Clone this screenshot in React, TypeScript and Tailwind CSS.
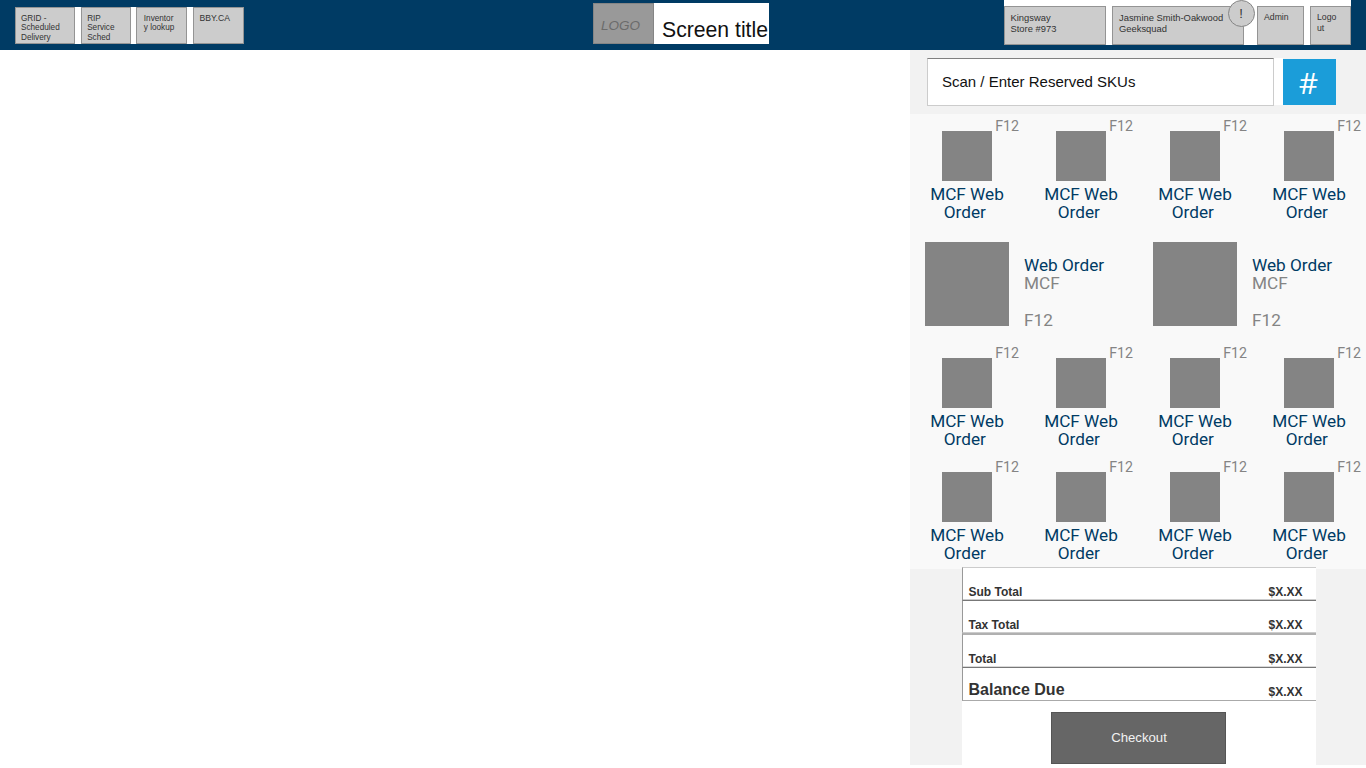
import React from "react";

function NavBox({ className, children }: { className: string; children: React.ReactNode }) {
  return (
    <div className={`shrink-0 border border-[#949494] bg-[#cccccc] text-[#333333] ${className}`}>{children}</div>
  );
}

function Tile() {
  return (
    <button className="relative flex h-[114px] w-[114px] flex-col items-center pt-[17px] text-[#003b64]">
      <span className="absolute top-[4px] right-[5px] text-[14.2px] leading-[16px] text-[#848484]">F12</span>
      <span className="h-[50px] w-[50px] bg-[#848484]" />
      <span className="mt-[4px] text-center text-[17.2px] leading-[18px] whitespace-nowrap">
        MCF Web
        <br />
        Order&nbsp;
      </span>
    </button>
  );
}

function TileRow() {
  return (
    <div className="flex">
      {[0, 1, 2, 3].map((i) => (
        <Tile key={i} />
      ))}
    </div>
  );
}

function WideTile() {
  return (
    <button className="flex h-[113px] w-[228px] gap-[15px] pt-[14px] pl-[15px] text-left text-[17.2px] leading-[18px] text-[#848484]">
      <span className="h-[84px] w-[84px] bg-[#848484]" />
      <span className="flex flex-col pt-[14px]">
        <span className="text-[#003b64]">Web Order</span>
        <span>MCF</span>
        <span className="mt-[19px]">F12</span>
      </span>
    </button>
  );
}

function TotalRow({ label, className, labelClass }: { label: string; className: string; labelClass: string }) {
  return (
    <div className={`flex items-end justify-between border-l border-l-[#999999] pr-[13.5px] pl-[5.5px] font-bold ${className}`}>
      <span className={labelClass}>{label}</span>
      <span className="text-[12px] leading-[14px]">$X.XX</span>
    </div>
  );
}

export default function App() {
  return (
    <div className="flex h-[768px] w-[1366px] flex-col overflow-hidden bg-white font-['Liberation_Sans',Arial,sans-serif]">
      <header className="flex h-[50px] shrink-0 items-start bg-[#003b64]">
        <nav className="mt-[7px] ml-[15px] flex h-[37px] w-[229px] justify-between bg-white text-[8.2px] leading-[9.7px]">
          <NavBox className="w-[60px] pt-[5.5px] pl-[5px]">GRID -<br />Scheduled<br />Delivery</NavBox>
          <NavBox className="w-[50px] pt-[5.5px] pl-[5.5px]">RIP<br />Service<br />Sched</NavBox>
          <NavBox className="w-[51px] pt-[5.5px] pl-[6.5px]">Inventor<br />y lookup</NavBox>
          <NavBox className="w-[51px] pt-[5.5px] pl-[5.5px] text-[8.6px]">BBY.CA</NavBox>
        </nav>

        <div className="mt-[3px] ml-[349px] flex h-[41px] w-[176px] bg-white">
          <div className="flex w-[61px] items-center border border-[#858585] bg-[#999999] pt-[5px] pl-[7px] text-[13.5px] text-[#6b6b6b] italic">
            LOGO
          </div>
          <h1 className="pt-[15px] pl-[8px] text-[21.2px] leading-[24px] whitespace-nowrap text-[#111111]">Screen title</h1>
        </div>

        <div className="ml-[235px] flex h-[45px] w-[347px] items-end bg-white text-[9.4px] leading-[11px]">
          <NavBox className="h-[39px] w-[102px] pt-[5px] pl-[5.5px]">Kingsway<br />Store #973</NavBox>
          <NavBox className="relative ml-[6px] h-[39px] w-[132px] pt-[5px] pl-[6px] whitespace-nowrap">
            Jasmine Smith-Oakwood<br />Geeksquad
            <span className="absolute top-[-7px] left-[114.5px] flex h-[27px] w-[27px] items-center justify-center rounded-full border border-[#858585] bg-[#cccccc] text-[13px]">
              !
            </span>
          </NavBox>
          <NavBox className="ml-[13px] h-[39px] w-[47px] pt-[5px] pl-[6px] text-[8.7px]">Admin</NavBox>
          <NavBox className="ml-[6px] h-[39px] w-[41px] pt-[5px] pl-[6px] text-[8.7px]">Logo<br />ut</NavBox>
        </div>
      </header>

      <main className="flex h-[715px] justify-end">
        <aside className="flex w-[456px] flex-col bg-[#f2f2f2]">
          <div className="flex h-[64px] shrink-0 pt-[8px] pl-[17px]">
            <div className="flex h-[48px] w-[347px] items-center border border-[#cccccc] border-t-[#808080] bg-white pl-[14px] text-[15px] text-[#111111]">
              Scan / Enter Reserved SKUs
            </div>
            <div className="h-[47px] w-[9px] bg-white" />
            <button className="mt-px flex h-[46px] w-[53px] items-center justify-center bg-[#1b9dd9] pt-[2px] pr-[2px] font-['Open_Sans',sans-serif] text-[30px] leading-none text-white">
              #
            </button>
          </div>

          <section className="h-[455px] shrink-0 bg-[#f9f9f9] font-[Roboto,sans-serif]">
            <TileRow />
            <div className="flex">
              <WideTile />
              <WideTile />
            </div>
            <TileRow />
            <TileRow />
          </section>

          <section className="relative mt-[-2px] ml-[52px] flex h-[198px] w-[354px] shrink-0 flex-col bg-white text-[#333333]">
            <TotalRow label="Sub Total" className="h-[34px] border-t border-b border-t-[#cccccc] border-b-[#777777] pb-px shadow-[inset_0_-1px_0_#cccccc]" labelClass="text-[12px] leading-[14px]" />
            <TotalRow label="Tax Total" className="h-[32px] border-b border-b-[#cccccc]" labelClass="text-[12px] leading-[14px]" />
            <TotalRow label="Total" className="h-[35px] border-t-2 border-b border-t-[#b0b0b0] border-b-[#777777] pb-px shadow-[inset_0_-1px_0_#d9d9d9]" labelClass="text-[12px] leading-[14px]" />
            <TotalRow label="Balance Due" className="h-[33px] border-b border-b-[#aaaaaa] pb-px" labelClass="text-[16px] leading-[18px]" />
            <button className="mt-[11px] ml-[89px] h-[52px] w-[175px] border border-[#555555] bg-[#666666] pl-px text-[13.2px] text-[#f2f2f2]">
              Checkout
            </button>
          </section>
        </aside>
      </main>
    </div>
  );
}
